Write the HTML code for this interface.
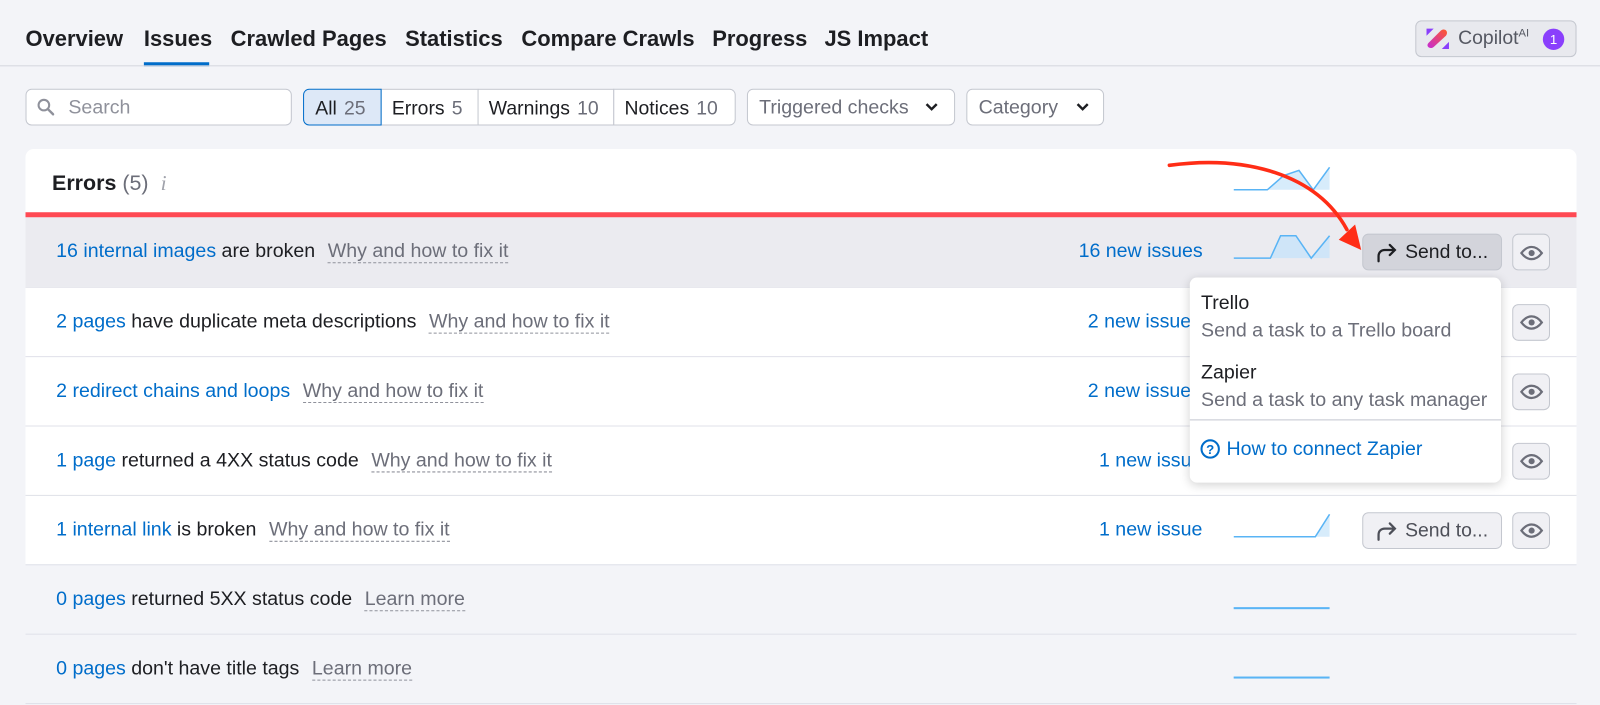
<!DOCTYPE html>
<html style="overflow:hidden;width:1600px;height:705px"><head><meta charset="utf-8"><style>
*{box-sizing:border-box;margin:0;padding:0}
body{width:1600px;height:705px;background:#f3f4f8;font-family:"Liberation Sans",sans-serif;color:#1d1e22;overflow:hidden;position:relative}
#w{position:absolute;left:0;top:0;width:1568px;height:691px;overflow:hidden;transform:scale(1.0204);transform-origin:0 0;font-size:19.2px}
.a{position:absolute;white-space:nowrap}
.tab{position:absolute;top:26px;font-size:21.5px;font-weight:bold;color:#1d1e22}
.box{position:absolute;border:1px solid #c4c7cf;border-radius:6px;background:#fff;height:36px;top:87px}
.seg{position:absolute;top:87px;height:36px;border:1px solid #c4c7cf;background:#fff;padding:8px 0 0 10px;font-size:19px}
.seg span{color:#6c6e79;margin-left:7px}
.row{position:absolute;left:25px;width:1520px;height:68px;border-top:1px solid #e0e1e9;background:#fff}
.row .t{position:absolute;left:30px;top:23px;white-space:nowrap}
.l{color:#006dca}
.d{color:#6c6e79;border-bottom:1.5px dashed #8f919b;margin-left:7px}
.n{position:absolute;top:23px;color:#006dca;white-space:nowrap}
.eye{position:absolute;left:1457px;top:16px;width:37px;height:36px;border:1px solid #c4c7cf;border-radius:6px;background:#f0f0f4}
.send{position:absolute;left:1310px;top:16px;width:137px;height:36px;border:1px solid #c4c7cf;border-radius:6px;background:#f0f0f4;color:#4d4f58;font-size:19px}
</style></head><body><div id="w">
<div class="tab" style="left:25px">Overview</div>
<div class="tab" style="left:141px">Issues</div>
<div class="a" style="left:141px;top:61px;width:64px;height:4px;background:#006dca"></div>
<div class="tab" style="left:226px">Crawled Pages</div>
<div class="tab" style="left:397px">Statistics</div>
<div class="tab" style="left:511px">Compare Crawls</div>
<div class="tab" style="left:698px">Progress</div>
<div class="tab" style="left:808px">JS Impact</div>
<div class="a" style="left:0;top:64px;width:1600px;height:1px;background:#d5d7de"></div>
<div class="a" style="left:1387px;top:20px;width:158px;height:36px;border:1px solid #c4c7cf;border-radius:6px;background:#e8e9ee"></div>
<svg class="a" style="left:1397px;top:27px" width="24" height="22" viewBox="0 0 24 22"><defs><linearGradient id="g" x1="0" y1="1" x2="1" y2="0"><stop offset="0" stop-color="#c42bd6"/><stop offset="1" stop-color="#ff5a2a"/></linearGradient></defs><path d="M1 1h7l-7 7zM23 21h-7l7-7z" fill="#8a3ffc"/><path d="M3 15L15 3c4-3 8 1 5 5L8 19c-4 3-8-1-5-4z" fill="url(#g)"/></svg>
<div class="a" style="left:1429px;top:27px;font-size:19px;color:#555862">Copilot<sup style="font-size:11px">AI</sup></div>
<div class="a" style="left:1512px;top:28px;width:21px;height:21px;border-radius:50%;background:#8a3ffc;color:#fff;font-size:13px;text-align:center;line-height:21px">1</div>

<div class="box" style="left:25px;width:261px"></div>
<svg class="a" style="left:36px;top:96px" width="18" height="18" viewBox="0 0 18 18"><circle cx="7" cy="7" r="5.2" fill="none" stroke="#8f919b" stroke-width="2"/><path d="M11 11l5 5" stroke="#8f919b" stroke-width="2.4" stroke-linecap="round"/></svg>
<div class="a" style="left:67px;top:95px;color:#8f919b">Search</div>
<div class="seg" style="left:297px;width:77px;border-radius:6px 0 0 6px;background:#dde8f7;border-color:#006dca;z-index:2;padding-left:11px">All<span>25</span></div>
<div class="seg" style="left:373px;width:96px">Errors<span>5</span></div>
<div class="seg" style="left:468px;width:134px">Warnings<span>10</span></div>
<div class="seg" style="left:601px;width:120px;border-radius:0 6px 6px 0">Notices<span>10</span></div>
<div class="box" style="left:732px;width:204px"></div>
<div class="a" style="left:744px;top:95px;color:#6c6e79">Triggered checks</div>
<svg class="a" style="left:906px;top:100px" width="14" height="10"><path d="M2 2l5 5 5-5" fill="none" stroke="#1d1e22" stroke-width="2.4"/></svg>
<div class="box" style="left:947px;width:135px"></div>
<div class="a" style="left:959px;top:95px;color:#6c6e79">Category</div>
<svg class="a" style="left:1054px;top:100px" width="14" height="10"><path d="M2 2l5 5 5-5" fill="none" stroke="#1d1e22" stroke-width="2.4"/></svg>

<div class="a" style="left:25px;top:146px;width:1520px;height:62px;background:#fff;border-radius:8px 8px 0 0"></div>
<div class="a" style="left:51px;top:167px;font-size:21px"><b>Errors</b> <span style="color:#6c6e79">(5)</span> <i style="color:#a0a2ab;font-family:'Liberation Serif',serif;margin-left:6px">i</i></div>
<svg class="a" style="left:1209px;top:160px" width="95" height="28"><path d="M0 26H33L49 12L64 7L78 26L94 4V26Z" fill="#d7ecfb"/><path d="M0 26H33L49 12L64 7L78 26L94 4" fill="none" stroke="#59b4f5" stroke-width="1.5"/></svg>
<div class="a" style="left:25px;top:208px;width:1520px;height:5px;background:#ff4953"></div>

<div class="row" style="top:213px;background:#ebebf0;border-top:0">
<div class="t"><span class="l">16 internal images</span> are broken <span class="d">Why and how to fix it</span></div>
<div class="n" style="left:1032px">16 new issues</div>
<svg class="a" style="left:1184px;top:16px" width="95" height="26"><path d="M0 24H36L46 2H61L76 24L94 2V24Z" fill="#cfe5f8"/><path d="M0 24H36L46 2H61L76 24L94 2" fill="none" stroke="#59b4f5" stroke-width="1.5"/></svg>
<div class="send" style="background:#d3d4db;color:#1d1e22"><svg class="a" style="left:12px;top:8px" width="22" height="20"><path d="M3 18V13c0-4 3-6 6-6h10M14 2l5 5-5 5" fill="none" stroke="#1d1e22" stroke-width="2.2" stroke-linecap="round"/></svg><span class="a" style="left:41px;top:7px">Send to...</span></div>
<div class="eye"></div>
</div>
<div class="row" style="top:281px"><div class="t"><span class="l">2 pages</span> have duplicate meta descriptions <span class="d">Why and how to fix it</span></div><div class="n" style="left:1041px">2 new issues</div><div class="eye"></div></div>
<div class="row" style="top:349px"><div class="t"><span class="l">2 redirect chains and loops</span> <span class="d">Why and how to fix it</span></div><div class="n" style="left:1041px">2 new issues</div><div class="eye"></div></div>
<div class="row" style="top:417px"><div class="t"><span class="l">1 page</span> returned a 4XX status code <span class="d">Why and how to fix it</span></div><div class="n" style="left:1052px">1 new issue</div><div class="eye"></div></div>
<div class="row" style="top:485px"><div class="t"><span class="l">1 internal link</span> is broken <span class="d">Why and how to fix it</span></div><div class="n" style="left:1052px">1 new issue</div>
<svg class="a" style="left:1184px;top:16px" width="95" height="26"><path d="M0 24H80L94 2V24Z" fill="#d7ecfb"/><path d="M0 24H80L94 2" fill="none" stroke="#59b4f5" stroke-width="1.5"/></svg>
<div class="send"><svg class="a" style="left:12px;top:8px" width="22" height="20"><path d="M3 18V13c0-4 3-6 6-6h10M14 2l5 5-5 5" fill="none" stroke="#4d4f58" stroke-width="2.2" stroke-linecap="round"/></svg><span class="a" style="left:41px;top:7px">Send to...</span></div>
<div class="eye"></div></div>
<div class="row" style="top:553px;background:#f3f4f8"><div class="t"><span class="l">0 pages</span> returned 5XX status code <span class="d">Learn more</span></div><div class="a" style="left:1184px;top:41px;width:94px;height:1.5px;background:#59b4f5"></div></div>
<div class="row" style="top:621px;background:#f3f4f8"><div class="t"><span class="l">0 pages</span> don't have title tags <span class="d">Learn more</span></div><div class="a" style="left:1184px;top:41px;width:94px;height:1.5px;background:#59b4f5"></div></div>
<div class="a" style="left:25px;top:689px;width:1520px;height:1px;background:#e0e1e9"></div>

<svg class="a" style="left:1484px;top:240px;z-index:3" width="34" height="300" viewBox="0 0 34 300">
<g fill="none" stroke="#6c6e79" stroke-width="2.2"><g id="e"><path d="M7 8c6-8 14-8 20 0c-6 8-14 8-20 0z"/><circle cx="17" cy="8" r="3" fill="#6c6e79" stroke="none"/></g>
<use href="#e" y="68"/><use href="#e" y="136"/><use href="#e" y="204"/><use href="#e" y="272"/></g></svg>

<div class="a" style="left:1166px;top:272px;width:305px;height:201px;background:#fff;border-radius:7px;box-shadow:0 2px 10px rgba(0,0,0,.18);z-index:4">
<div class="a" style="left:11px;top:15px;color:#1d1e22">Trello</div>
<div class="a" style="left:11px;top:42px;color:#6c6e79">Send a task to a Trello board</div>
<div class="a" style="left:11px;top:83px;color:#1d1e22">Zapier</div>
<div class="a" style="left:11px;top:110px;color:#6c6e79">Send a task to any task manager</div>
<div class="a" style="left:0;top:139px;width:305px;height:1px;background:#c4c7cf"></div>
<svg class="a" style="left:10px;top:158px" width="20" height="20"><circle cx="10" cy="10" r="8.5" fill="none" stroke="#006dca" stroke-width="2"/><text x="10" y="15" font-size="13" font-weight="bold" text-anchor="middle" fill="#006dca" font-family="Liberation Sans">?</text></svg>
<div class="a" style="left:36px;top:158px;color:#006dca">How to connect Zapier</div>
</div>

<svg class="a" style="left:1140px;top:150px;z-index:5" width="200" height="110"><path d="M6 12C80 2 150 20 180 75" fill="none" stroke="#ff2d16" stroke-width="3.5" stroke-linecap="round"/><path d="M194 95L172 85L188 70Z" fill="#ff2d16"/></svg>
</div></body></html>
